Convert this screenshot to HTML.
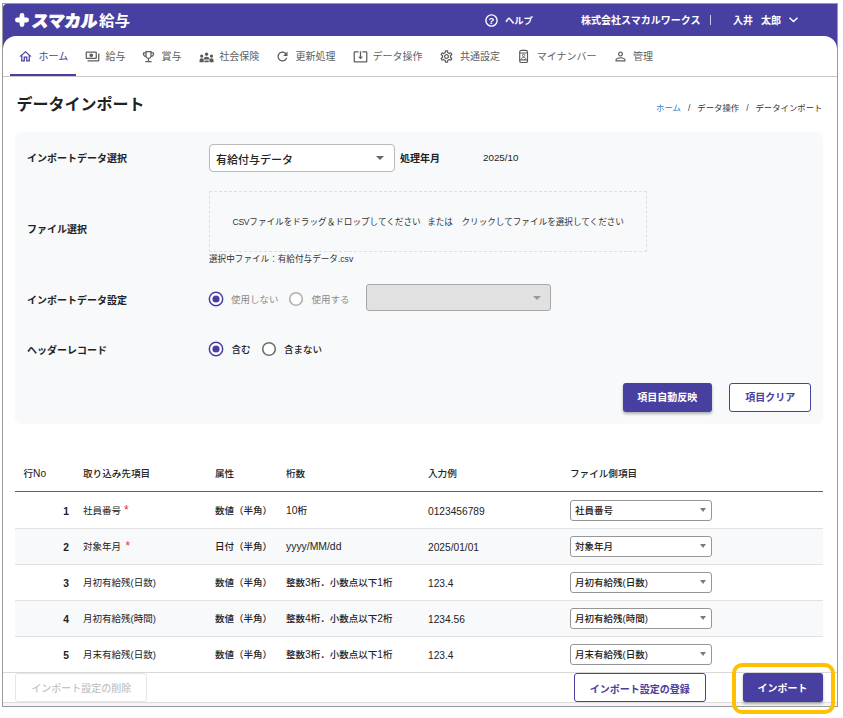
<!DOCTYPE html>
<html lang="ja">
<head>
<meta charset="utf-8">
<title>データインポート</title>
<style>
*{box-sizing:border-box;margin:0;padding:0}
html,body{width:843px;height:718px;background:#fff;overflow:hidden}
body{font-family:"Liberation Sans","Noto Sans CJK JP",sans-serif;color:#222;position:relative;font-size:10px}
.frame{position:absolute;left:2px;top:3px;width:836px;height:704px;border:1px solid #9a9a9a;background:#fff;overflow:hidden}
.o{position:absolute;left:-3px;top:-4px;width:843px;height:718px}
.o *{position:absolute}
.t{white-space:nowrap;line-height:16px;height:16px}
.b{font-weight:700}
.hdr{left:3px;top:4px;width:834px;height:46px;background:#4840a1;border-top-left-radius:4px}
.main{left:3px;top:36px;width:834px;height:680px;background:#fff;border-radius:13px 13px 0 0}
.h{color:#fff;font-weight:700;font-size:10px}
.n{font-size:10px;color:#606060}
.navline{left:3px;top:76px;width:834px;height:1px;background:#c8c8c8}
.navact{left:10px;top:74px;width:66px;height:2px;background:#4840a1}
.panel{left:15.400px;top:132px;width:807.500px;height:292px;background:#f8f9fb;border-radius:7px}
.lbl{font-size:10px;font-weight:700;color:#222}
.sel{background:#fff;border:1px solid #b9b9b9;border-radius:3px}
.caret{width:0;height:0;border-left:3.5px solid transparent;border-right:3.5px solid transparent;border-top:4px solid #666}
.btn{border-radius:3px;text-align:center;font-weight:700;font-size:10px;white-space:nowrap}
.btn.p{background:#4840a1;color:#fff;box-shadow:0 2px 3px rgba(0,0,0,.3)}
.btn.w{background:#fff;color:#4840a1;border:1px solid #4840a1}
.th{font-size:9.600px;color:#222;font-weight:500}
.td{font-size:9.5px;color:#222}
.rb{left:15px;width:808px;height:1px;background:#e2e2e2}
.alt{left:15px;width:808px;height:35px;background:#f8f9fb}
.st{position:static!important}
.rq{color:#ee2c36;font-size:12px}
.m{font-weight:500}
.d{font-size:10.300px}
.s2{border-color:#969696}
</style>
</head>
<body>
<div class="frame"><div class="o">
  <div class="hdr"></div>
  <div class="main"></div>
  <!-- header -->
  <svg style="left:15px;top:13px" width="14" height="14" viewBox="0 0 14 14"><path d="M7 2.4v9.2M2.4 7h9.2" stroke="#fff" stroke-width="4.8" stroke-linecap="round" fill="none"/></svg>
  <div class="t h" id="lg1" style="left:31.300px;top:12px;font-size:16.5px;font-weight:900;line-height:18px;height:18px;-webkit-text-stroke:0.700px #fff;transform:skewX(-7deg);transform-origin:0 100%">スマカル</div>
  <div class="t h" id="lg2" style="left:98.700px;top:11.600px;font-size:14.300px;transform:scaleX(1.09);transform-origin:0 50%;font-weight:700;line-height:18px;height:18px">給与</div>
  <div class="t h" style="left:505px;top:13px;font-size:9.300px">ヘルプ</div>
  <div class="t h" style="left:581px;top:13px">株式会社スマカルワークス</div>
  <div class="t h" style="left:733px;top:13px">入井<span class="st" style="margin-left:8px">太郎</span></div>
  <svg style="left:485px;top:13.600px" width="13" height="13" viewBox="0 0 13 13"><circle cx="6.500" cy="6.500" r="5.600" fill="none" stroke="#fff" stroke-width="1.400"/><text x="6.500" y="9.900" text-anchor="middle" font-family="Liberation Sans, sans-serif" font-size="9.500" font-weight="700" fill="#fff">?</text></svg>
  <div style="left:710.400px;top:15px;width:1px;height:9.500px;background:#cdcae8"></div>
  <svg style="left:788px;top:16px" width="11" height="8" viewBox="0 0 11 8"><path d="M1.500 1.700l4 3.800 4-3.800" fill="none" stroke="#fff" stroke-width="1.500"/></svg>
  <!-- nav -->
  <div class="t n" style="left:38.5px;top:49px;color:#4840a1">ホーム</div>
  <div class="t n" style="left:105.5px;top:49px">給与</div>
  <div class="t n" style="left:161.5px;top:49px">賞与</div>
  <div class="t n" style="left:219.3px;top:49px">社会保険</div>
  <div class="t n" style="left:295.5px;top:49px">更新処理</div>
  <div class="t n" style="left:372.5px;top:49px">データ操作</div>
  <div class="t n" style="left:460px;top:49px">共通設定</div>
  <div class="t n" style="left:536.7px;top:49px">マイナンバー</div>
  <div class="t n" style="left:633px;top:49px">管理</div>
  <svg class="ic" style="left:17.8px;top:49.400px" width="15" height="15" viewBox="0 0 24 24"><path fill="#4840a1" d="M12 5.69l5 4.5V18h-2v-6H9v6H7v-7.81l5-4.5M12 3L2 12h3v8h6v-6h2v6h6v-8h3L12 3z"/></svg>
  <svg class="ic" style="left:84.75px;top:49.400px" width="15" height="15" viewBox="0 0 24 24"><path fill="#5e5e5e" d="M19 14V6c0-1.1-.9-2-2-2H3c-1.1 0-2 .9-2 2v8c0 1.1.9 2 2 2h14c1.1 0 2-.9 2-2zm-2 0H3V6h14v8zm-7-7c-1.66 0-3 1.34-3 3s1.34 3 3 3 3-1.34 3-3-1.34-3-3-3zm13 0v11c0 1.1-.9 2-2 2H4v-2h17V7h2z"/></svg>
  <svg class="ic" style="left:141.35px;top:49.400px" width="15" height="15" viewBox="0 0 24 24"><path fill="#5e5e5e" d="M19 5h-2V3H7v2H5c-1.1 0-2 .9-2 2v1c0 2.55 1.92 4.63 4.39 4.94.63 1.5 1.98 2.63 3.61 2.96V19H7v2h10v-2h-4v-3.1c1.63-.33 2.98-1.46 3.61-2.96C19.08 12.63 21 10.55 21 8V7c0-1.1-.9-2-2-2zM5 8V7h2v3.82C5.84 10.4 5 9.3 5 8zm7 6c-1.65 0-3-1.35-3-3V5h6v6c0 1.65-1.35 3-3 3zm7-6c0 1.3-.84 2.4-2 2.82V7h2v1z"/></svg>
  <svg class="ic" style="left:275.1px;top:49.400px" width="15" height="15" viewBox="0 0 24 24"><path fill="#5e5e5e" d="M17.65 6.35C16.2 4.9 14.21 4 12 4c-4.42 0-7.99 3.58-7.99 8s3.57 8 7.99 8c3.73 0 6.84-2.55 7.73-6h-2.08c-.82 2.33-3.04 4-5.65 4-3.31 0-6-2.69-6-6s2.69-6 6-6c1.66 0 3.14.69 4.22 1.78L13 11h7V4l-2.35 2.35z"/></svg>
  <svg class="ic" style="left:352.5px;top:49.400px" width="15" height="15" viewBox="0 0 24 24"><path fill="#5e5e5e" d="M12 16.5l4-4h-3v-9h-2v9H8l4 4zm9-13h-6v1.99h6v14.03H3V5.49h6V3.5H3c-1.1 0-2 .9-2 2v14c0 1.1.9 2 2 2h18c1.1 0 2-.9 2-2v-14c0-1.1-.9-2-2-2z"/></svg>
  <svg class="ic" style="left:438.8px;top:49.400px" width="15" height="15" viewBox="0 0 24 24"><path fill="#5e5e5e" d="M19.43 12.98c.04-.32.07-.64.07-.98 0-.34-.03-.66-.07-.98l2.11-1.65c.19-.15.24-.42.12-.64l-2-3.46c-.09-.16-.26-.25-.44-.25-.06 0-.12.01-.17.03l-2.49 1c-.52-.4-1.08-.73-1.69-.98l-.38-2.65C14.46 2.18 14.25 2 14 2h-4c-.25 0-.46.18-.49.42l-.38 2.65c-.61.25-1.17.59-1.69.98l-2.49-1c-.06-.02-.12-.03-.18-.03-.17 0-.34.09-.43.25l-2 3.46c-.13.22-.07.49.12.64l2.11 1.65c-.04.32-.07.65-.07.98 0 .33.03.66.07.98l-2.11 1.65c-.19.15-.24.42-.12.64l2 3.46c.09.16.26.25.44.25.06 0 .12-.01.17-.03l2.49-1c.52.4 1.08.73 1.69.98l.38 2.65c.03.24.24.42.49.42h4c.25 0 .46-.18.49-.42l.38-2.65c.61-.25 1.17-.59 1.69-.98l2.49 1c.06.02.12.03.18.03.17 0 .34-.09.43-.25l2-3.46c.12-.22.07-.49-.12-.64l-2.11-1.65zm-1.98-1.71c.04.31.05.52.05.73 0 .21-.02.43-.05.73l-.14 1.13.89.7 1.08.84-.7 1.21-1.27-.51-1.04-.42-.9.68c-.43.32-.84.56-1.25.73l-1.06.43-.16 1.13-.2 1.35h-1.4l-.19-1.35-.16-1.13-1.06-.43c-.43-.18-.83-.41-1.23-.71l-.91-.7-1.06.43-1.27.51-.7-1.21 1.08-.84.89-.7-.14-1.13c-.03-.31-.05-.54-.05-.74s.02-.43.05-.73l.14-1.13-.89-.7-1.08-.84.7-1.21 1.27.51 1.04.42.9-.68c.43-.32.84-.56 1.25-.73l1.06-.43.16-1.13.2-1.35h1.39l.19 1.35.16 1.13 1.06.43c.43.18.83.41 1.23.71l.91.7 1.06-.43 1.27-.51.7 1.21-1.07.85-.89.7.14 1.13zM12 8c-2.21 0-4 1.79-4 4s1.79 4 4 4 4-1.79 4-4-1.79-4-4-4zm0 6c-1.1 0-2-.9-2-2s.9-2 2-2 2 .9 2 2-.9 2-2 2z"/></svg>
  <svg class="ic" style="left:612.65px;top:49.400px" width="15" height="15" viewBox="0 0 24 24"><path fill="#5e5e5e" d="M12 5.9c1.16 0 2.1.94 2.1 2.1s-.94 2.1-2.1 2.1S9.900 9.16 9.900 8s.94-2.1 2.1-2.1m0 9c2.970 0 6.100 1.460 6.100 2.100v1.100H5.900V17c0-.64 3.130-2.100 6.100-2.100M12 4C9.790 4 8 5.790 8 8s1.790 4 4 4 4-1.790 4-4-1.790-4-4-4zm0 9c-2.670 0-8 1.340-8 4v3h16v-3c0-2.660-5.330-4-8-4z"/></svg>
  <svg class="ic" style="left:198.500px;top:49.600px" width="15" height="15" viewBox="0 0 24 24"><g fill="#585858"><circle cx="12.100" cy="6.700" r="2.650"/><circle cx="4.250" cy="9.600" r="2.600"/><circle cx="19.950" cy="9.600" r="2.600"/><path d="M7.300 15c0-2.600 1.900-4.300 4.800-4.300s4.800 1.700 4.800 4.300zM0.900 19.700v-3.400a3.300 3.300 0 0 1 6.600 0v3.400zM16.700 19.700v-3.400a3.300 3.300 0 0 1 6.600 0v3.400zM8.700 16.600h6.800v3.100H8.700z"/></g></svg>
  <svg class="ic" style="left:518px;top:49px" width="12" height="15" viewBox="0 0 12 15"><g fill="none" stroke="#5a5a5a" stroke-width="1.150"><rect x="1.700" y="1.400" width="7.800" height="12.100" rx="1.600"/><path d="M2 4h7.300M2 10.900h7.300"/><circle cx="5.600" cy="6.400" r="1.150" stroke-width=".9"/><path d="M3.500 9.700c0-1 1-1.400 2.100-1.400s2.100.4 2.100 1.400" stroke-width=".9"/></g></svg>
  <div class="navline"></div>
  <div class="navact"></div>
  <!-- title -->
  <div class="t b" id="title" style="left:16.500px;top:93px;font-size:16px;line-height:24px;height:24px;color:#222">データインポート</div>
  <div class="t" id="bc" style="right:20.500px;top:100px;font-size:8.400px;color:#333"><span class="st" style="color:#3b78c8">ホーム</span><span class="st" style="margin:0 7px">/</span><span class="st">データ操作</span><span class="st" style="margin:0 7px">/</span><span class="st">データインポート</span></div>
  <!-- panel -->
  <div class="panel"></div>
  <div class="t lbl" style="left:27px;top:151px">インポートデータ選択</div>
  <div class="sel" style="left:209px;top:144px;width:186px;height:28px;border-radius:4px"></div>
  <div class="t" style="left:216px;top:151.500px;font-size:11px;font-weight:500;color:#222">有給付与データ</div>
  <div class="caret" style="left:376px;top:156px;border-left-width:4px;border-right-width:4px"></div>
  <div class="t lbl" style="left:400px;top:151px">処理年月</div>
  <div class="t" style="left:483px;top:150px;font-size:9.800px">2025/10</div>
  <div style="left:209px;top:191px;width:438px;height:61px;border:1px dashed #dfdfdf"></div>
  <div class="t" style="left:232.500px;top:213.500px;font-size:8.600px;color:#333"><span class="st" style="font-size:8.600px;letter-spacing:-0.300px">CSV</span>ファイルをドラッグ＆ドロップしてください<span class="st" style="margin:0 8.500px 0 6.500px">または</span>クリックしてファイルを選択してください</div>
  <div class="t lbl" style="left:27px;top:222px">ファイル選択</div>
  <div class="t" style="left:209px;top:251px;font-size:8.600px;color:#333">選択中ファイル：有給付与データ.csv</div>
  <div class="t lbl" style="left:27px;top:293px">インポートデータ設定</div>
  <svg style="left:208.4px;top:291.4px" width="16" height="16" viewBox="0 0 16 16"><circle cx="8" cy="8" r="6.700" fill="#fff" stroke="#4840a1" stroke-width="1.500"/><circle cx="8" cy="8" r="3.600" fill="#4840a1"/></svg>
  <div class="t" style="left:231px;top:292px;font-size:9.5px;color:#8a8a8a">使用しない</div>
  <svg style="left:288.3px;top:291.4px" width="16" height="16" viewBox="0 0 16 16"><circle cx="8" cy="8" r="6.300" fill="#fff" stroke="#b0b0b0" stroke-width="1.600"/></svg>
  <div class="t" style="left:311.500px;top:292px;font-size:9.5px;color:#8a8a8a">使用する</div>
  <div class="sel" style="left:366px;top:284px;width:185px;height:27px;background:#e1e1e1;border-color:#a8a8a8;border-radius:3px"></div>
  <div class="caret" style="left:533px;top:296px;border-top-color:#999;border-left-width:4px;border-right-width:4px"></div>
  <div class="t lbl" style="left:27px;top:342.500px">ヘッダーレコード</div>
  <svg style="left:208.4px;top:340.7px" width="16" height="16" viewBox="0 0 16 16"><circle cx="8" cy="8" r="6.700" fill="#fff" stroke="#4840a1" stroke-width="1.500"/><circle cx="8" cy="8" r="3.600" fill="#4840a1"/></svg>
  <div class="t m" style="left:231.500px;top:341.500px;font-size:9.5px">含む</div>
  <svg style="left:260.9px;top:340.7px" width="16" height="16" viewBox="0 0 16 16"><circle cx="8" cy="8" r="6.300" fill="#fff" stroke="#6e6e6e" stroke-width="1.600"/></svg>
  <div class="t m" style="left:284px;top:341.500px;font-size:9.5px">含まない</div>
  <div class="btn p" style="left:622.800px;top:383.400px;width:89px;height:28.800px;line-height:30.500px">項目自動反映</div>
  <div class="btn w" style="left:729.200px;top:383.400px;width:82px;height:28.800px;line-height:28.500px">項目クリア</div>
  <!-- table -->
  <div class="t th" style="left:23.500px;top:466px">行<span class="st" style="font-size:10.200px">No</span></div>
  <div class="t th" style="left:83px;top:466px">取り込み先項目</div>
  <div class="t th" style="left:215px;top:466px">属性</div>
  <div class="t th" style="left:286px;top:466px">桁数</div>
  <div class="t th" style="left:428px;top:466px">入力例</div>
  <div class="t th" style="left:570px;top:466px">ファイル側項目</div>
  <div style="left:15px;top:491px;width:808px;height:1px;background:#5d56b0"></div>
  <div class="rb" style="top:528px"></div>
  <div class="t td b" style="left:40px;width:29px;text-align:right;top:504px;font-size:10.300px">1</div>
  <div class="t td" style="left:83px;top:503px">社員番号</div>
  <div class="t rq" style="left:124px;top:502px">*</div>
  <div class="t td m" style="left:215px;top:503px">数値（半角）</div>
  <div class="t td m" style="left:286px;top:503px"><span class="st d">10</span>桁</div>
  <div class="t td m" style="left:428px;top:504px;font-size:10.200px">0123456789</div>
  <div class="sel s2" style="left:570px;top:500px;width:142px;height:21px"></div>
  <div class="t td m" style="left:575px;top:503px">社員番号</div>
  <div class="caret" style="left:700px;top:508px;border-top-color:#7c7c7c"></div>
  <div class="alt" style="top:529px"></div>
  <div class="rb" style="top:564px"></div>
  <div class="t td b" style="left:40px;width:29px;text-align:right;top:540px;font-size:10.300px">2</div>
  <div class="t td" style="left:83px;top:539px">対象年月</div>
  <div class="t rq" style="left:125.500px;top:538px">*</div>
  <div class="t td m" style="left:215px;top:539px">日付（半角）</div>
  <div class="t td m" style="left:286px;top:539px;font-size:10.400px">yyyy/MM/dd</div>
  <div class="t td m" style="left:428px;top:540px;font-size:10.200px">2025/01/01</div>
  <div class="sel s2" style="left:570px;top:536px;width:142px;height:21px"></div>
  <div class="t td m" style="left:575px;top:539px">対象年月</div>
  <div class="caret" style="left:700px;top:544px;border-top-color:#7c7c7c"></div>
  <div class="rb" style="top:600px"></div>
  <div class="t td b" style="left:40px;width:29px;text-align:right;top:576px;font-size:10.300px">3</div>
  <div class="t td" style="left:83px;top:575px">月初有給残(日数)</div>
  <div class="t td m" style="left:215px;top:575px">数値（半角）</div>
  <div class="t td m" style="left:286px;top:575px">整数<span class="st d">3</span>桁．小数点以下<span class="st d">1</span>桁</div>
  <div class="t td m" style="left:428px;top:576px;font-size:10.200px">123.4</div>
  <div class="sel s2" style="left:570px;top:572px;width:142px;height:21px"></div>
  <div class="t td m" style="left:575px;top:575px">月初有給残(日数)</div>
  <div class="caret" style="left:700px;top:580px;border-top-color:#7c7c7c"></div>
  <div class="alt" style="top:601px"></div>
  <div class="rb" style="top:636px"></div>
  <div class="t td b" style="left:40px;width:29px;text-align:right;top:612px;font-size:10.300px">4</div>
  <div class="t td" style="left:83px;top:611px">月初有給残(時間)</div>
  <div class="t td m" style="left:215px;top:611px">数値（半角）</div>
  <div class="t td m" style="left:286px;top:611px">整数<span class="st d">4</span>桁．小数点以下<span class="st d">2</span>桁</div>
  <div class="t td m" style="left:428px;top:612px;font-size:10.200px">1234.56</div>
  <div class="sel s2" style="left:570px;top:608px;width:142px;height:21px"></div>
  <div class="t td m" style="left:575px;top:611px">月初有給残(時間)</div>
  <div class="caret" style="left:700px;top:616px;border-top-color:#7c7c7c"></div>
  <div class="rb" style="top:672px"></div>
  <div class="t td b" style="left:40px;width:29px;text-align:right;top:648px;font-size:10.300px">5</div>
  <div class="t td" style="left:83px;top:647px">月末有給残(日数)</div>
  <div class="t td m" style="left:215px;top:647px">数値（半角）</div>
  <div class="t td m" style="left:286px;top:647px">整数<span class="st d">3</span>桁．小数点以下<span class="st d">1</span>桁</div>
  <div class="t td m" style="left:428px;top:648px;font-size:10.200px">123.4</div>
  <div class="sel s2" style="left:570px;top:644px;width:142px;height:21px"></div>
  <div class="t td m" style="left:575px;top:647px">月末有給残(日数)</div>
  <div class="caret" style="left:700px;top:652px;border-top-color:#7c7c7c"></div>
  <!-- footer -->
  <div style="left:3px;top:672px;width:834px;height:34px;background:#fff;border-top:1px solid #d9d9d9"></div>
  <div style="left:3px;top:702px;width:834px;height:4px;background:#f5f5f5;border-top:1.500px solid #dedede"></div>
  <div class="btn" style="left:15.400px;top:673.200px;width:131.500px;height:29.200px;line-height:30px;border:1px solid #e6e6e6;color:#c4c4c4;background:#fff;font-weight:500">インポート設定の削除</div>
  <div class="btn w" style="left:573.500px;top:673.200px;width:132.500px;height:29.200px;line-height:31px">インポート設定の登録</div>
  <div class="btn p" style="left:742.600px;top:672.800px;width:80px;height:29.200px;line-height:32px">インポート</div>
</div></div>
<div style="position:absolute;left:731.500px;top:662.800px;width:103.300px;height:50.800px;border:4.200px solid #ffc000;border-radius:10px"></div>
</body>
</html>
